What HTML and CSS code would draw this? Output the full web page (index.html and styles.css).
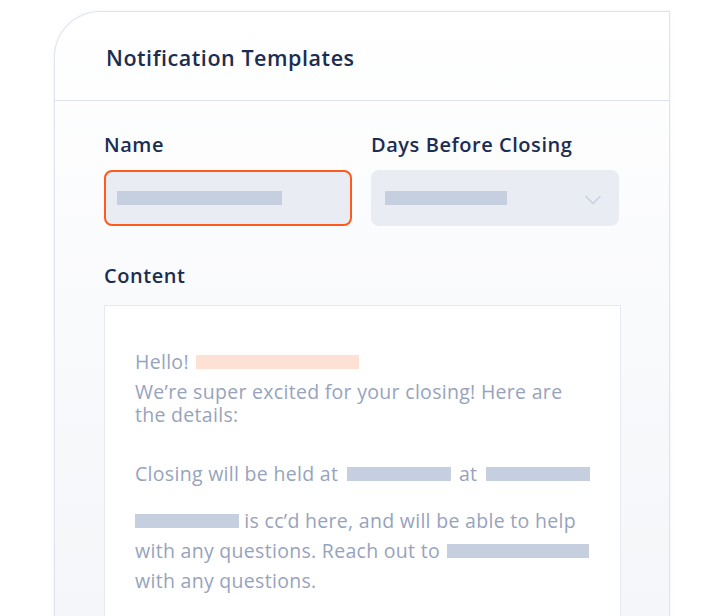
FILE: index.html
```html
<!DOCTYPE html>
<html>
<head>
<meta charset="utf-8">
<link rel="stylesheet" href="styles.css">
</head>
<body>
<div class="card">
  <div class="card-header">
    <h1 class="title">Notification Templates</h1>
  </div>
  <div class="card-body">
    <div class="fields">
      <div class="field">
        <label class="label">Name</label>
        <div class="input input-focus"><span class="bar bar-name"></span></div>
      </div>
      <div class="field">
        <label class="label">Days Before Closing</label>
        <div class="input select">
          <span class="bar bar-days"></span>
          <svg class="chevron" width="16" height="10" viewBox="0 0 16 10"><path d="M1 1.5 L8 8.5 L15 1.5" fill="none" stroke="#c8d0df" stroke-width="1.6" stroke-linecap="round" stroke-linejoin="round"/></svg>
        </div>
      </div>
    </div>
    <label class="label content-label">Content</label>
    <div class="content-box">
      <p class="hello">Hello! <span class="bar bar-orange"></span></p>
      <p class="intro">We’re super excited for your closing! Here are<br>the details:</p>
      <p class="para">Closing will be held at <span class="bar bar-w104 bar-gap"></span> at <span class="bar bar-w104 bar-gap"></span></p>
      <p class="para cc"><span class="bar bar-w104"></span> is cc’d here, and will be able to help<br>with any questions. Reach out to <span class="bar bar-w142"></span><br>with any questions.</p>
    </div>
  </div>
</div>
</body>
</html>
```
FILE: styles.css
```css
* { box-sizing: border-box; }
html, body { margin: 0; padding: 0; background: #ffffff; }
body {
  font-family: "Open Sans", Lato, "Liberation Sans", sans-serif;
  overflow: hidden;
  height: 616px;
}
.card {
  margin: 11px 0 0 54px;
  width: 616px;
  height: 605px;
  display: flex;
  flex-direction: column;
  border: 1.5px solid #dfe3ec;
  border-bottom: none;
  border-top-left-radius: 46px;
  background: linear-gradient(180deg, #ffffff 0%, #f9fafc 50%, #f5f6f9 100%);
  box-shadow: 0 0 3px rgba(200, 206, 222, 0.35);
}
.card-header {
  height: 89px;
  flex: none;
  border-bottom: 1.5px solid #dde2ec;
  padding: 3px 0 0 51px;
  display: flex;
  align-items: center;
}
.title {
  margin: 0;
  font-size: 21.5px;
  font-weight: 600;
  color: #1b2d52;
  letter-spacing: 0.55px;
}
.card-body {
  flex: 1;
  display: flex;
  flex-direction: column;
  min-height: 0;
  padding: 32px 48px 0 49px;
}
.fields {
  display: grid;
  grid-template-columns: 248px 248px;
  column-gap: 19px;
}
.label {
  display: block;
  font-size: 20px;
  line-height: 24px;
  font-weight: 600;
  color: #1b2d52;
  letter-spacing: 0.55px;
  margin-bottom: 13px;
}
.input {
  height: 56px;
  border-radius: 8px;
  background: #e9ecf3;
  display: flex;
  align-items: center;
  padding-left: 14px;
}
.input-focus {
  border: 2px solid #ff5a1c;
  padding-left: 11px;
}
.select {
  justify-content: space-between;
  padding-right: 18px;
}
.chevron { display: block; margin-top: 4px; }
.bar {
  display: inline-block;
  height: 14px;
  background: #c6cfdf;
}
.bar-name { width: 165px; }
.bar-days { width: 122px; }
.content-label {
  margin-top: 38px;
  margin-bottom: 17px;
}
.content-box {
  flex: 1;
  background: #ffffff;
  border: 1px solid #e6e9f0;
  border-bottom: none;
  padding: 42px 20px 0 30px;
  color: #97a3bd;
  font-size: 19.5px;
  letter-spacing: 0.3px;
}
.content-box p { margin: 0; white-space: nowrap; }
.hello { line-height: 28px; margin-bottom: 4px !important; }
.bar-orange { width: 163px; background: #fde1d4; margin-left: 2px; }
.intro { line-height: 23px; }
.para { line-height: 30px; margin-top: 33px !important; }
.cc { margin-top: 17px !important; }
.bar-w104 { width: 104px; }
.bar-gap { margin: 0 3px; }
.bar-w142 { width: 142px; margin-left: 2px; }
```
